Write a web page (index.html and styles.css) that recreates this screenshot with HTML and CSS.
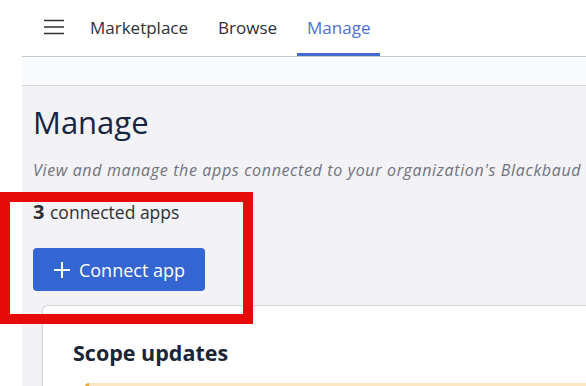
FILE: index.html
```html
<!DOCTYPE html>
<html lang="en">

<head>
    <meta charset="UTF-8" />
    <title>Manage – Marketplace</title>
    <link rel="stylesheet" href="styles.css">
</head>

<body>
    <div class="gutter"></div>

    <div class="app">
        <nav class="topnav">
            <button class="menu-btn" aria-label="Menu">
                <svg width="20" height="16" viewBox="0 0 20 16">
                    <path d="M0 1.5h20M0 8h20M0 14.5h20" stroke="#2e3035" stroke-width="1.6" fill="none" />
                </svg>
            </button>
            <a class="tab" href="#">Marketplace</a>
            <a class="tab" href="#">Browse</a>
            <a class="tab active" href="#">Manage</a>
        </nav>
        <div class="subbar"></div>

        <main class="main">
            <h1 class="page-title">Manage</h1>
            <p class="page-desc">View and manage the apps connected to your organization's Blackbaud environment.</p>

            <div class="count"><strong>3</strong> connected apps</div>

            <button class="btn-primary">
                <svg width="18" height="18" viewBox="0 0 18 18">
                    <path d="M9 1v16M1 9h16" stroke="#fff" stroke-width="2" fill="none" />
                </svg>
                Connect app
            </button>

            <section class="card">
                <h2>Scope updates</h2>
                <div class="warning"></div>
            </section>
        </main>
    </div>

    <div class="highlight"></div>
</body>

</html>
```

FILE: styles.css
```css
*,
*::before,
*::after {
    box-sizing: border-box;
    margin: 0;
    padding: 0;
}

html,
body {
    height: 100%;
    overflow: hidden;
}

body {
    display: flex;
    font-family: "Open Sans", Lato, sans-serif;
    background: #fff;
    color: #2e3035;
    position: relative;
}

.gutter {
    width: 22px;
    flex-shrink: 0;
    background: #fff;
}

.app {
    flex: 1;
    display: flex;
    flex-direction: column;
    min-width: 0;
}

.topnav {
    height: 57px;
    flex-shrink: 0;
    display: flex;
    align-items: stretch;
    background: #fff;
    border-bottom: 1px solid #c5c8d0;
    padding-left: 22px;
}

.menu-btn {
    border: none;
    background: none;
    display: flex;
    align-items: center;
    margin-right: 16px;
    margin-top: -2px;
}

.tab {
    display: flex;
    align-items: center;
    padding: 0 10px;
    margin-right: 10px;
    font-size: 17px;
    color: #2e3035;
    text-decoration: none;
    border-bottom: 3px solid transparent;
    padding-top: 2px;
}

.tab.active {
    color: #4d72d6;
    border-bottom-color: #4469cf;
}

.subbar {
    height: 29px;
    flex-shrink: 0;
    background: #f9fafd;
    border-bottom: 1px solid #d6d8de;
}

.main {
    flex: 1;
    display: flex;
    flex-direction: column;
    align-items: flex-start;
    min-height: 0;
    overflow: hidden;
    background: #f2f2f7;
    padding: 16px 0 0 11px;
}

.page-title {
    font-size: 31px;
    font-weight: 400;
    color: #182540;
    line-height: 40px;
}

.page-desc {
    margin-top: 17px;
    font-size: 16px;
    letter-spacing: 0.65px;
    font-style: italic;
    color: #70737c;
    white-space: nowrap;
}

.count {
    margin-top: 17px;
    font-size: 17.5px;
    color: #2e3035;
}

.count strong {
    font-size: 20px;
    font-weight: 700;
    margin-right: 1px;
}

.btn-primary {
    margin-top: 23px;
    width: 172px;
    height: 43px;
    flex-shrink: 0;
    display: flex;
    align-items: center;
    justify-content: center;
    gap: 8px;
    border: none;
    border-radius: 4px;
    background: #3466d3;
    color: #fff;
    font-family: inherit;
    font-size: 18px;
    padding-right: 0;
}

.card {
    margin: 14px 0 0 9px;
    align-self: stretch;
    flex: 1;
    background: #fff;
    border: 1px solid #d4d6dc;
    border-right: none;
    border-bottom: none;
    border-radius: 6px 0 0 0;
    padding: 33px 0 0 30px;
    box-shadow: 0 1px 3px rgba(0, 0, 0, 0.08);
}

.card h2 {
    font-size: 21.5px;
    font-weight: 700;
    color: #1c2536;
    line-height: 28px;
}

.warning {
    margin: 16px 0 0 12px;
    height: 30px;
    background: #fce6c3;
    border-left: 4px solid #f1a83e;
    border-radius: 4px 0 0 0;
}

/* annotation box drawn over the page */
.highlight {
    position: absolute;
    left: 0;
    top: 192px;
    width: 253px;
    height: 132px;
    border: 10px solid #e60a0a;
}
```
